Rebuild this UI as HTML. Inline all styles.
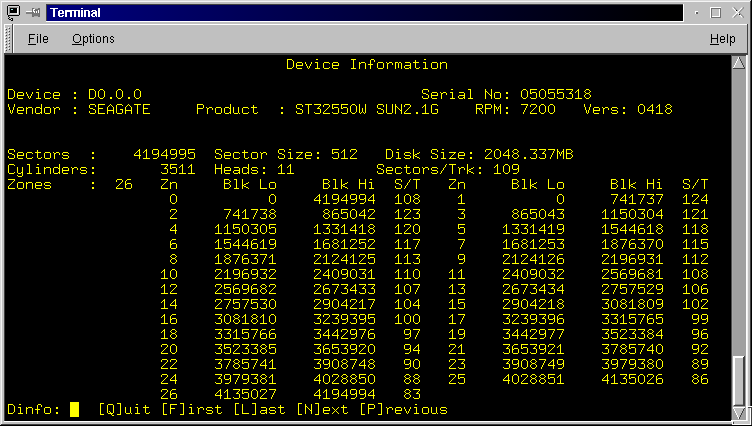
<!DOCTYPE html>
<html><head><meta charset="utf-8">
<style>
*{margin:0;padding:0;box-sizing:border-box}
html,body{width:752px;height:426px;overflow:hidden;background:#c0c0c0;position:relative}
i,.s,.t{position:absolute;display:block}
#title{left:47px;top:5px;width:636px;height:16px;background:linear-gradient(to right,#000080 0px,#000000 617px)}
</style></head><body>
<i style="left:0px;top:0px;width:752px;height:1px;background:#d8d8d8"></i><i style="left:0px;top:0px;width:1px;height:426px;background:#d8d8d8"></i><i style="left:1px;top:1px;width:750px;height:1px;background:#f4f4f4"></i><i style="left:1px;top:1px;width:1px;height:424px;background:#f4f4f4"></i><i style="left:750px;top:1px;width:1px;height:405px;background:#404040"></i><i style="left:751px;top:0px;width:1px;height:406px;background:#000"></i><i style="left:1px;top:424px;width:732px;height:1px;background:#404040"></i><i style="left:0px;top:425px;width:752px;height:1px;background:#000"></i><i style="left:46px;top:4px;width:638px;height:1px;background:#404040"></i><i style="left:46px;top:4px;width:1px;height:18px;background:#404040"></i><i style="left:46px;top:21px;width:638px;height:1px;background:#fff"></i><i style="left:683px;top:4px;width:1px;height:18px;background:#fff"></i><i style="left:4px;top:24px;width:744px;height:1px;background:#fff"></i><i style="left:4px;top:24px;width:1px;height:29px;background:#fff"></i><i style="left:747px;top:24px;width:1px;height:30px;background:#404040"></i><i style="left:4px;top:53px;width:744px;height:2px;background:#404040"></i><i style="left:12px;top:24px;width:1px;height:29px;background:#404040"></i><i style="left:13px;top:25px;width:1px;height:28px;background:#fff"></i><i style="left:6px;top:29px;width:1px;height:1px;background:#404040"></i><i style="left:5px;top:28px;width:1px;height:1px;background:#fff"></i><i style="left:9px;top:28px;width:1px;height:1px;background:#404040"></i><i style="left:8px;top:27px;width:1px;height:1px;background:#fff"></i><i style="left:6px;top:32px;width:1px;height:1px;background:#404040"></i><i style="left:5px;top:31px;width:1px;height:1px;background:#fff"></i><i style="left:9px;top:31px;width:1px;height:1px;background:#404040"></i><i style="left:8px;top:30px;width:1px;height:1px;background:#fff"></i><i style="left:6px;top:35px;width:1px;height:1px;background:#404040"></i><i style="left:5px;top:34px;width:1px;height:1px;background:#fff"></i><i style="left:9px;top:34px;width:1px;height:1px;background:#404040"></i><i style="left:8px;top:33px;width:1px;height:1px;background:#fff"></i><i style="left:6px;top:38px;width:1px;height:1px;background:#404040"></i><i style="left:5px;top:37px;width:1px;height:1px;background:#fff"></i><i style="left:9px;top:37px;width:1px;height:1px;background:#404040"></i><i style="left:8px;top:36px;width:1px;height:1px;background:#fff"></i><i style="left:6px;top:41px;width:1px;height:1px;background:#404040"></i><i style="left:5px;top:40px;width:1px;height:1px;background:#fff"></i><i style="left:9px;top:40px;width:1px;height:1px;background:#404040"></i><i style="left:8px;top:39px;width:1px;height:1px;background:#fff"></i><i style="left:6px;top:44px;width:1px;height:1px;background:#404040"></i><i style="left:5px;top:43px;width:1px;height:1px;background:#fff"></i><i style="left:9px;top:43px;width:1px;height:1px;background:#404040"></i><i style="left:8px;top:42px;width:1px;height:1px;background:#fff"></i><i style="left:6px;top:47px;width:1px;height:1px;background:#404040"></i><i style="left:5px;top:46px;width:1px;height:1px;background:#fff"></i><i style="left:9px;top:46px;width:1px;height:1px;background:#404040"></i><i style="left:8px;top:45px;width:1px;height:1px;background:#fff"></i><i style="left:6px;top:50px;width:1px;height:1px;background:#404040"></i><i style="left:5px;top:49px;width:1px;height:1px;background:#fff"></i><i style="left:9px;top:49px;width:1px;height:1px;background:#404040"></i><i style="left:8px;top:48px;width:1px;height:1px;background:#fff"></i><i style="left:4px;top:55px;width:1px;height:366px;background:#404040"></i><i style="left:5px;top:55px;width:726px;height:366px;background:#000"></i><i style="left:4px;top:421px;width:728px;height:1px;background:#fff"></i><i style="left:732px;top:421px;width:1px;height:4px;background:#fff"></i><i style="left:733px;top:422px;width:1px;height:3px;background:#404040"></i><i style="left:734px;top:421px;width:16px;height:3px;background:#c8c8c8"></i><i style="left:731px;top:55px;width:15px;height:366px;background:#a0a0a0"></i><i style="left:731px;top:54px;width:16px;height:2px;background:#404040"></i><i style="left:731px;top:55px;width:1px;height:366px;background:#505050"></i><i style="left:732px;top:56px;width:1px;height:364px;background:#a8a8a8"></i><i style="left:746px;top:55px;width:1px;height:366px;background:#fff"></i><i style="left:731px;top:420px;width:16px;height:1px;background:#fff"></i><i style="left:733px;top:356px;width:12px;height:50px;background:#c0c0c0"></i><i style="left:733px;top:356px;width:11px;height:2px;background:#fff"></i><i style="left:733px;top:356px;width:2px;height:49px;background:#fff"></i><i style="left:744px;top:356px;width:1px;height:50px;background:#404040"></i><i style="left:743px;top:357px;width:1px;height:49px;background:#404040"></i><i style="left:734px;top:405px;width:11px;height:1px;background:#404040"></i><i style="left:735px;top:404px;width:8px;height:1px;background:#909090"></i><i style="left:747px;top:55px;width:1px;height:366px;background:#f0f0f0"></i><i style="left:747px;top:406px;width:5px;height:1px;background:#fff"></i><i style="left:748px;top:407px;width:4px;height:1px;background:#404040"></i><i style="left:750px;top:408px;width:1px;height:17px;background:#fff"></i><i style="left:751px;top:408px;width:1px;height:17px;background:#404040"></i><i style="left:733px;top:424px;width:18px;height:1px;background:#fff"></i>
<i id="title"></i>
<svg class="s" style="left:0;top:0" width="752" height="50" shape-rendering="crispEdges"><path fill="#fff" d="M50 8h8v1h-8zM81 8h2v1h-2zM98 8h2v1h-2zM53 9h2v1h-2zM98 9h2v1h-2zM53 10h2v1h-2zM59 10h4v1h-4zM65 10h15v1h-15zM81 10h2v1h-2zM84 10h5v1h-5zM92 10h4v1h-4zM98 10h2v1h-2zM53 11h2v1h-2zM58 11h2v1h-2zM62 11h2v1h-2zM65 11h7v1h-7zM74 11h2v1h-2zM78 11h2v1h-2zM81 11h2v1h-2zM84 11h2v1h-2zM88 11h2v1h-2zM91 11h2v1h-2zM95 11h2v1h-2zM98 11h2v1h-2zM53 12h2v1h-2zM58 12h2v1h-2zM62 12h2v1h-2zM65 12h2v1h-2zM70 12h2v1h-2zM74 12h2v1h-2zM78 12h2v1h-2zM81 12h2v1h-2zM84 12h2v1h-2zM88 12h2v1h-2zM93 12h4v1h-4zM98 12h2v1h-2zM53 13h2v1h-2zM58 13h6v1h-6zM65 13h2v1h-2zM70 13h2v1h-2zM74 13h2v1h-2zM78 13h2v1h-2zM81 13h2v1h-2zM84 13h2v1h-2zM88 13h2v1h-2zM92 13h5v1h-5zM98 13h2v1h-2zM53 14h2v1h-2zM58 14h2v1h-2zM65 14h2v1h-2zM70 14h2v1h-2zM74 14h2v1h-2zM78 14h2v1h-2zM81 14h2v1h-2zM84 14h2v1h-2zM88 14h2v1h-2zM91 14h2v1h-2zM95 14h2v1h-2zM98 14h2v1h-2zM53 15h2v1h-2zM58 15h2v1h-2zM62 15h2v1h-2zM65 15h2v1h-2zM70 15h2v1h-2zM74 15h2v1h-2zM78 15h2v1h-2zM81 15h2v1h-2zM84 15h2v1h-2zM88 15h2v1h-2zM91 15h2v1h-2zM95 15h2v1h-2zM98 15h2v1h-2zM53 16h2v1h-2zM59 16h4v1h-4zM65 16h2v1h-2zM70 16h2v1h-2zM74 16h2v1h-2zM78 16h2v1h-2zM81 16h2v1h-2zM84 16h2v1h-2zM88 16h2v1h-2zM92 16h3v1h-3zM96 16h1v1h-1zM98 16h2v1h-2z"/><path fill="#000" d="M29 34h6v1h-6zM37 34h1v1h-1zM40 34h1v1h-1zM75 34h4v1h-4zM90 34h1v1h-1zM93 34h1v1h-1zM711 34h1v1h-1zM717 34h1v1h-1zM727 34h1v1h-1zM29 35h1v1h-1zM40 35h1v1h-1zM74 35h1v1h-1zM79 35h1v1h-1zM90 35h1v1h-1zM711 35h1v1h-1zM717 35h1v1h-1zM727 35h1v1h-1zM29 36h1v1h-1zM37 36h1v1h-1zM40 36h1v1h-1zM44 36h3v1h-3zM73 36h1v1h-1zM80 36h1v1h-1zM83 36h1v1h-1zM85 36h2v1h-2zM89 36h3v1h-3zM93 36h1v1h-1zM97 36h3v1h-3zM103 36h1v1h-1zM105 36h2v1h-2zM111 36h2v1h-2zM711 36h1v1h-1zM717 36h1v1h-1zM721 36h3v1h-3zM727 36h1v1h-1zM730 36h1v1h-1zM732 36h2v1h-2zM29 37h1v1h-1zM37 37h1v1h-1zM40 37h1v1h-1zM43 37h1v1h-1zM47 37h1v1h-1zM73 37h1v1h-1zM80 37h1v1h-1zM83 37h2v1h-2zM87 37h1v1h-1zM90 37h1v1h-1zM93 37h1v1h-1zM96 37h1v1h-1zM100 37h1v1h-1zM103 37h2v1h-2zM107 37h1v1h-1zM110 37h1v1h-1zM113 37h1v1h-1zM711 37h1v1h-1zM717 37h1v1h-1zM720 37h1v1h-1zM724 37h1v1h-1zM727 37h1v1h-1zM730 37h2v1h-2zM734 37h1v1h-1zM29 38h5v1h-5zM37 38h1v1h-1zM40 38h1v1h-1zM43 38h1v1h-1zM47 38h1v1h-1zM73 38h1v1h-1zM80 38h1v1h-1zM83 38h1v1h-1zM87 38h1v1h-1zM90 38h1v1h-1zM93 38h1v1h-1zM96 38h1v1h-1zM100 38h1v1h-1zM103 38h1v1h-1zM107 38h1v1h-1zM110 38h1v1h-1zM711 38h7v1h-7zM720 38h1v1h-1zM724 38h1v1h-1zM727 38h1v1h-1zM730 38h1v1h-1zM734 38h1v1h-1zM29 39h1v1h-1zM37 39h1v1h-1zM40 39h1v1h-1zM43 39h5v1h-5zM73 39h1v1h-1zM80 39h1v1h-1zM83 39h1v1h-1zM87 39h1v1h-1zM90 39h1v1h-1zM93 39h1v1h-1zM96 39h1v1h-1zM100 39h1v1h-1zM103 39h1v1h-1zM107 39h1v1h-1zM111 39h2v1h-2zM711 39h1v1h-1zM717 39h1v1h-1zM720 39h5v1h-5zM727 39h1v1h-1zM730 39h1v1h-1zM734 39h1v1h-1zM29 40h1v1h-1zM37 40h1v1h-1zM40 40h1v1h-1zM43 40h1v1h-1zM73 40h1v1h-1zM80 40h1v1h-1zM83 40h1v1h-1zM87 40h1v1h-1zM90 40h1v1h-1zM93 40h1v1h-1zM96 40h1v1h-1zM100 40h1v1h-1zM103 40h1v1h-1zM107 40h1v1h-1zM113 40h1v1h-1zM711 40h1v1h-1zM717 40h1v1h-1zM720 40h1v1h-1zM727 40h1v1h-1zM730 40h1v1h-1zM734 40h1v1h-1zM29 41h1v1h-1zM37 41h1v1h-1zM40 41h1v1h-1zM43 41h1v1h-1zM47 41h1v1h-1zM74 41h1v1h-1zM79 41h1v1h-1zM83 41h2v1h-2zM87 41h1v1h-1zM90 41h1v1h-1zM93 41h1v1h-1zM96 41h1v1h-1zM100 41h1v1h-1zM103 41h1v1h-1zM107 41h1v1h-1zM110 41h1v1h-1zM113 41h1v1h-1zM711 41h1v1h-1zM717 41h1v1h-1zM720 41h1v1h-1zM724 41h1v1h-1zM727 41h1v1h-1zM730 41h2v1h-2zM734 41h1v1h-1zM29 42h1v1h-1zM37 42h1v1h-1zM40 42h1v1h-1zM44 42h3v1h-3zM75 42h4v1h-4zM83 42h1v1h-1zM85 42h2v1h-2zM90 42h2v1h-2zM93 42h1v1h-1zM97 42h3v1h-3zM103 42h1v1h-1zM107 42h1v1h-1zM111 42h2v1h-2zM711 42h1v1h-1zM717 42h1v1h-1zM721 42h3v1h-3zM727 42h1v1h-1zM730 42h1v1h-1zM732 42h2v1h-2zM83 43h1v1h-1zM730 43h1v1h-1zM28 44h8v1h-8zM72 44h10v1h-10zM83 44h1v1h-1zM710 44h9v1h-9zM730 44h1v1h-1zM83 45h1v1h-1zM730 45h1v1h-1z"/></svg>
<svg class="s" style="left:0;top:0" width="24" height="24" shape-rendering="crispEdges"><rect x="8" y="5" width="11" height="1" fill="#000"/><rect x="8" y="15" width="11" height="1" fill="#000"/><rect x="7" y="6" width="1" height="9" fill="#000"/><rect x="19" y="6" width="1" height="9" fill="#000"/><rect x="8" y="6" width="11" height="9" fill="#c8c8c8"/><rect x="8" y="6" width="11" height="1" fill="#d4d4d4"/><rect x="8" y="6" width="1" height="9" fill="#d0d0d0"/><rect x="9" y="7" width="9" height="1" fill="#909090"/><rect x="9" y="7" width="1" height="7" fill="#909090"/><rect x="10" y="8" width="7" height="5" fill="#000"/><rect x="11" y="9" width="2" height="1" fill="#a0e8e8"/><rect x="17" y="8" width="1" height="6" fill="#fff"/><rect x="10" y="13" width="7" height="1" fill="#d8d8d8"/><rect x="8" y="16" width="1" height="1" fill="#000"/><rect x="9" y="17" width="1" height="1" fill="#000"/><rect x="8" y="18" width="1" height="1" fill="#000"/><rect x="9" y="19" width="2" height="1" fill="#000"/><rect x="11" y="18" width="2" height="1" fill="#000"/><rect x="12" y="19" width="1" height="1" fill="#000"/><rect x="11" y="20" width="2" height="1" fill="#000"/><rect x="11" y="19" width="1" height="1" fill="#e8e8e8"/></svg><svg class="s" style="left:0;top:0" width="48" height="24" shape-rendering="crispEdges"><rect x="26" y="11" width="6" height="1" fill="#fff"/><rect x="26" y="12" width="6" height="2" fill="#808080"/><rect x="32" y="8" width="8" height="9" fill="#707070"/><rect x="33" y="13" width="6" height="3" fill="#787878"/><rect x="34" y="8" width="4" height="1" fill="#b0b0b0"/><rect x="34" y="16" width="4" height="1" fill="#b0b0b0"/><rect x="33" y="9" width="2" height="1" fill="#fff"/><rect x="33" y="10" width="1" height="2" fill="#fff"/><rect x="34" y="11" width="1" height="2" fill="#fff"/><rect x="36" y="11" width="1" height="2" fill="#fff"/><rect x="38" y="10" width="1" height="3" fill="#fff"/></svg><svg class="s" style="left:0;top:0" width="752" height="24" shape-rendering="crispEdges"><rect x="695" y="11" width="3" height="1" fill="#fff"/><rect x="695" y="11" width="1" height="3" fill="#fff"/><rect x="696" y="12" width="2" height="2" fill="#606060"/><rect x="710" y="7" width="11" height="1" fill="#fff"/><rect x="710" y="7" width="1" height="11" fill="#fff"/><rect x="711" y="8" width="10" height="1" fill="#707070"/><rect x="711" y="8" width="1" height="10" fill="#707070"/><rect x="720" y="8" width="1" height="10" fill="#707070"/><rect x="711" y="17" width="10" height="1" fill="#707070"/><rect x="719" y="9" width="1" height="8" fill="#fff"/><rect x="712" y="16" width="8" height="1" fill="#fff"/>
<path d="M733.5 7.5 L743.5 17.5 M743.5 7.5 L733.5 17.5" stroke="#606060" stroke-width="1.2" fill="none" shape-rendering="auto"/>
<path d="M732.5 7.5 L742.5 17.5 M742.5 7.5 L732.5 17.5" stroke="#fff" stroke-width="1.2" fill="none" shape-rendering="auto"/>
<rect x="736" y="10" width="1" height="1" fill="#000"/><rect x="739" y="14" width="1" height="1" fill="#000"/>
</svg><svg class="s" style="left:0;top:0" width="752" height="426" shape-rendering="crispEdges"><rect x="738" y="57" width="1" height="1" fill="#fff"/><rect x="739" y="57" width="1" height="1" fill="#404040"/><rect x="738" y="58" width="1" height="1" fill="#fff"/><rect x="739" y="58" width="1" height="1" fill="#404040"/><rect x="738" y="59" width="2" height="1" fill="#c0c0c0"/><rect x="737" y="59" width="1" height="1" fill="#fff"/><rect x="740" y="59" width="1" height="1" fill="#404040"/><rect x="738" y="60" width="2" height="1" fill="#c0c0c0"/><rect x="737" y="60" width="1" height="1" fill="#fff"/><rect x="740" y="60" width="1" height="1" fill="#404040"/><rect x="737" y="61" width="4" height="1" fill="#c0c0c0"/><rect x="736" y="61" width="1" height="1" fill="#fff"/><rect x="741" y="61" width="1" height="1" fill="#404040"/><rect x="737" y="62" width="4" height="1" fill="#c0c0c0"/><rect x="736" y="62" width="1" height="1" fill="#fff"/><rect x="741" y="62" width="1" height="1" fill="#404040"/><rect x="736" y="63" width="6" height="1" fill="#c0c0c0"/><rect x="735" y="63" width="1" height="1" fill="#fff"/><rect x="742" y="63" width="1" height="1" fill="#404040"/><rect x="736" y="64" width="6" height="1" fill="#c0c0c0"/><rect x="735" y="64" width="1" height="1" fill="#fff"/><rect x="742" y="64" width="1" height="1" fill="#404040"/><rect x="735" y="65" width="8" height="1" fill="#c0c0c0"/><rect x="734" y="65" width="1" height="1" fill="#fff"/><rect x="743" y="65" width="1" height="1" fill="#404040"/><rect x="735" y="66" width="8" height="1" fill="#c0c0c0"/><rect x="734" y="66" width="1" height="1" fill="#fff"/><rect x="743" y="66" width="1" height="1" fill="#404040"/><rect x="734" y="67" width="10" height="1" fill="#c0c0c0"/><rect x="733" y="67" width="1" height="1" fill="#fff"/><rect x="744" y="67" width="1" height="1" fill="#404040"/><rect x="733" y="68" width="12" height="1" fill="#404040"/><rect x="733" y="407" width="12" height="1" fill="#fff"/><rect x="734" y="408" width="10" height="1" fill="#c0c0c0"/><rect x="733" y="408" width="1" height="1" fill="#fff"/><rect x="744" y="408" width="1" height="1" fill="#404040"/><rect x="735" y="409" width="8" height="1" fill="#c0c0c0"/><rect x="734" y="409" width="1" height="1" fill="#fff"/><rect x="743" y="409" width="1" height="1" fill="#404040"/><rect x="735" y="410" width="8" height="1" fill="#c0c0c0"/><rect x="734" y="410" width="1" height="1" fill="#fff"/><rect x="743" y="410" width="1" height="1" fill="#404040"/><rect x="736" y="411" width="6" height="1" fill="#c0c0c0"/><rect x="735" y="411" width="1" height="1" fill="#fff"/><rect x="742" y="411" width="1" height="1" fill="#404040"/><rect x="736" y="412" width="6" height="1" fill="#c0c0c0"/><rect x="735" y="412" width="1" height="1" fill="#fff"/><rect x="742" y="412" width="1" height="1" fill="#404040"/><rect x="737" y="413" width="4" height="1" fill="#c0c0c0"/><rect x="736" y="413" width="1" height="1" fill="#fff"/><rect x="741" y="413" width="1" height="1" fill="#404040"/><rect x="737" y="414" width="4" height="1" fill="#c0c0c0"/><rect x="736" y="414" width="1" height="1" fill="#fff"/><rect x="741" y="414" width="1" height="1" fill="#404040"/><rect x="738" y="415" width="2" height="1" fill="#c0c0c0"/><rect x="737" y="415" width="1" height="1" fill="#fff"/><rect x="740" y="415" width="1" height="1" fill="#404040"/><rect x="738" y="416" width="2" height="1" fill="#c0c0c0"/><rect x="737" y="416" width="1" height="1" fill="#fff"/><rect x="740" y="416" width="1" height="1" fill="#404040"/><rect x="738" y="417" width="1" height="1" fill="#fff"/><rect x="739" y="417" width="1" height="1" fill="#404040"/><rect x="738" y="418" width="1" height="1" fill="#fff"/><rect x="739" y="418" width="1" height="1" fill="#404040"/></svg>

<svg class="s" style="left:7px;top:57px" width="720" height="360" shape-rendering="crispEdges" fill="#ffff00"><defs><path id="g46" d="M4 10h2v1h-2zM4 11h2v1h-2z"/><path id="g47" d="M7 2h1v1h-1zM6 3h1v1h-1zM6 4h1v1h-1zM5 5h1v1h-1zM4 6h1v1h-1zM4 7h1v1h-1zM3 8h1v1h-1zM2 9h1v1h-1zM2 10h1v1h-1zM1 11h1v1h-1z"/><path id="g48" d="M3 2h3v1h-3zM2 3h1v1h-1zM6 3h1v1h-1zM1 4h1v1h-1zM7 4h1v1h-1zM1 5h1v1h-1zM7 5h1v1h-1zM1 6h1v1h-1zM7 6h1v1h-1zM1 7h1v1h-1zM7 7h1v1h-1zM1 8h1v1h-1zM7 8h1v1h-1zM1 9h1v1h-1zM7 9h1v1h-1zM2 10h1v1h-1zM6 10h1v1h-1zM3 11h3v1h-3z"/><path id="g49" d="M4 2h1v1h-1zM3 3h2v1h-2zM2 4h1v1h-1zM4 4h1v1h-1zM1 5h1v1h-1zM4 5h1v1h-1zM4 6h1v1h-1zM4 7h1v1h-1zM4 8h1v1h-1zM4 9h1v1h-1zM4 10h1v1h-1zM1 11h7v1h-7z"/><path id="g50" d="M2 2h5v1h-5zM1 3h1v1h-1zM7 3h1v1h-1zM1 4h1v1h-1zM7 4h1v1h-1zM6 5h1v1h-1zM5 6h1v1h-1zM4 7h1v1h-1zM3 8h1v1h-1zM2 9h1v1h-1zM1 10h1v1h-1zM1 11h7v1h-7z"/><path id="g51" d="M1 2h7v1h-7zM7 3h1v1h-1zM6 4h1v1h-1zM5 5h1v1h-1zM4 6h3v1h-3zM7 7h1v1h-1zM7 8h1v1h-1zM7 9h1v1h-1zM1 10h1v1h-1zM7 10h1v1h-1zM2 11h5v1h-5z"/><path id="g52" d="M6 2h1v1h-1zM5 3h2v1h-2zM4 4h1v1h-1zM6 4h1v1h-1zM3 5h1v1h-1zM6 5h1v1h-1zM2 6h1v1h-1zM6 6h1v1h-1zM1 7h1v1h-1zM6 7h1v1h-1zM1 8h7v1h-7zM6 9h1v1h-1zM6 10h1v1h-1zM6 11h1v1h-1z"/><path id="g53" d="M1 2h7v1h-7zM1 3h1v1h-1zM1 4h1v1h-1zM1 5h1v1h-1zM3 5h4v1h-4zM1 6h2v1h-2zM7 6h1v1h-1zM7 7h1v1h-1zM7 8h1v1h-1zM7 9h1v1h-1zM1 10h1v1h-1zM7 10h1v1h-1zM2 11h5v1h-5z"/><path id="g54" d="M3 2h4v1h-4zM2 3h1v1h-1zM1 4h1v1h-1zM1 5h1v1h-1zM1 6h1v1h-1zM3 6h4v1h-4zM1 7h2v1h-2zM7 7h1v1h-1zM1 8h1v1h-1zM7 8h1v1h-1zM1 9h1v1h-1zM7 9h1v1h-1zM1 10h1v1h-1zM7 10h1v1h-1zM2 11h5v1h-5z"/><path id="g55" d="M1 2h7v1h-7zM7 3h1v1h-1zM6 4h1v1h-1zM6 5h1v1h-1zM5 6h1v1h-1zM5 7h1v1h-1zM4 8h1v1h-1zM4 9h1v1h-1zM3 10h1v1h-1zM3 11h1v1h-1z"/><path id="g56" d="M3 2h3v1h-3zM2 3h1v1h-1zM6 3h1v1h-1zM1 4h1v1h-1zM7 4h1v1h-1zM2 5h1v1h-1zM6 5h1v1h-1zM3 6h3v1h-3zM2 7h1v1h-1zM6 7h1v1h-1zM1 8h1v1h-1zM7 8h1v1h-1zM1 9h1v1h-1zM7 9h1v1h-1zM2 10h1v1h-1zM6 10h1v1h-1zM3 11h3v1h-3z"/><path id="g57" d="M2 2h5v1h-5zM1 3h1v1h-1zM7 3h1v1h-1zM1 4h1v1h-1zM7 4h1v1h-1zM1 5h1v1h-1zM7 5h1v1h-1zM1 6h1v1h-1zM6 6h2v1h-2zM2 7h4v1h-4zM7 7h1v1h-1zM7 8h1v1h-1zM7 9h1v1h-1zM6 10h1v1h-1zM2 11h4v1h-4z"/><path id="g58" d="M4 5h2v1h-2zM4 6h2v1h-2zM4 10h2v1h-2zM4 11h2v1h-2z"/><path id="g65" d="M4 2h1v1h-1zM3 3h1v1h-1zM5 3h1v1h-1zM2 4h1v1h-1zM6 4h1v1h-1zM1 5h1v1h-1zM7 5h1v1h-1zM1 6h1v1h-1zM7 6h1v1h-1zM1 7h1v1h-1zM7 7h1v1h-1zM1 8h7v1h-7zM1 9h1v1h-1zM7 9h1v1h-1zM1 10h1v1h-1zM7 10h1v1h-1zM1 11h1v1h-1zM7 11h1v1h-1z"/><path id="g66" d="M1 2h5v1h-5zM1 3h1v1h-1zM6 3h1v1h-1zM1 4h1v1h-1zM7 4h1v1h-1zM1 5h1v1h-1zM6 5h1v1h-1zM1 6h5v1h-5zM1 7h1v1h-1zM6 7h1v1h-1zM1 8h1v1h-1zM7 8h1v1h-1zM1 9h1v1h-1zM7 9h1v1h-1zM1 10h1v1h-1zM6 10h1v1h-1zM1 11h5v1h-5z"/><path id="g67" d="M2 2h5v1h-5zM1 3h1v1h-1zM7 3h1v1h-1zM1 4h1v1h-1zM1 5h1v1h-1zM1 6h1v1h-1zM1 7h1v1h-1zM1 8h1v1h-1zM1 9h1v1h-1zM1 10h1v1h-1zM7 10h1v1h-1zM2 11h5v1h-5z"/><path id="g68" d="M1 2h5v1h-5zM1 3h1v1h-1zM6 3h1v1h-1zM1 4h1v1h-1zM7 4h1v1h-1zM1 5h1v1h-1zM7 5h1v1h-1zM1 6h1v1h-1zM7 6h1v1h-1zM1 7h1v1h-1zM7 7h1v1h-1zM1 8h1v1h-1zM7 8h1v1h-1zM1 9h1v1h-1zM7 9h1v1h-1zM1 10h1v1h-1zM6 10h1v1h-1zM1 11h5v1h-5z"/><path id="g69" d="M1 2h7v1h-7zM1 3h1v1h-1zM1 4h1v1h-1zM1 5h1v1h-1zM1 6h5v1h-5zM1 7h1v1h-1zM1 8h1v1h-1zM1 9h1v1h-1zM1 10h1v1h-1zM1 11h7v1h-7z"/><path id="g70" d="M1 2h7v1h-7zM1 3h1v1h-1zM1 4h1v1h-1zM1 5h1v1h-1zM1 6h5v1h-5zM1 7h1v1h-1zM1 8h1v1h-1zM1 9h1v1h-1zM1 10h1v1h-1zM1 11h1v1h-1z"/><path id="g71" d="M2 2h5v1h-5zM1 3h1v1h-1zM7 3h1v1h-1zM1 4h1v1h-1zM1 5h1v1h-1zM1 6h1v1h-1zM1 7h1v1h-1zM5 7h3v1h-3zM1 8h1v1h-1zM7 8h1v1h-1zM1 9h1v1h-1zM7 9h1v1h-1zM1 10h1v1h-1zM7 10h1v1h-1zM2 11h5v1h-5z"/><path id="g72" d="M1 2h1v1h-1zM7 2h1v1h-1zM1 3h1v1h-1zM7 3h1v1h-1zM1 4h1v1h-1zM7 4h1v1h-1zM1 5h1v1h-1zM7 5h1v1h-1zM1 6h7v1h-7zM1 7h1v1h-1zM7 7h1v1h-1zM1 8h1v1h-1zM7 8h1v1h-1zM1 9h1v1h-1zM7 9h1v1h-1zM1 10h1v1h-1zM7 10h1v1h-1zM1 11h1v1h-1zM7 11h1v1h-1z"/><path id="g73" d="M2 2h5v1h-5zM4 3h1v1h-1zM4 4h1v1h-1zM4 5h1v1h-1zM4 6h1v1h-1zM4 7h1v1h-1zM4 8h1v1h-1zM4 9h1v1h-1zM4 10h1v1h-1zM2 11h5v1h-5z"/><path id="g76" d="M1 2h1v1h-1zM1 3h1v1h-1zM1 4h1v1h-1zM1 5h1v1h-1zM1 6h1v1h-1zM1 7h1v1h-1zM1 8h1v1h-1zM1 9h1v1h-1zM1 10h1v1h-1zM1 11h7v1h-7z"/><path id="g77" d="M1 2h1v1h-1zM7 2h1v1h-1zM1 3h1v1h-1zM7 3h1v1h-1zM1 4h2v1h-2zM6 4h2v1h-2zM1 5h1v1h-1zM3 5h1v1h-1zM5 5h1v1h-1zM7 5h1v1h-1zM1 6h1v1h-1zM3 6h1v1h-1zM5 6h1v1h-1zM7 6h1v1h-1zM1 7h1v1h-1zM4 7h1v1h-1zM7 7h1v1h-1zM1 8h1v1h-1zM4 8h1v1h-1zM7 8h1v1h-1zM1 9h1v1h-1zM7 9h1v1h-1zM1 10h1v1h-1zM7 10h1v1h-1zM1 11h1v1h-1zM7 11h1v1h-1z"/><path id="g78" d="M1 2h1v1h-1zM7 2h1v1h-1zM1 3h1v1h-1zM7 3h1v1h-1zM1 4h2v1h-2zM7 4h1v1h-1zM1 5h1v1h-1zM3 5h1v1h-1zM7 5h1v1h-1zM1 6h1v1h-1zM4 6h1v1h-1zM7 6h1v1h-1zM1 7h1v1h-1zM5 7h1v1h-1zM7 7h1v1h-1zM1 8h1v1h-1zM6 8h2v1h-2zM1 9h1v1h-1zM7 9h1v1h-1zM1 10h1v1h-1zM7 10h1v1h-1zM1 11h1v1h-1zM7 11h1v1h-1z"/><path id="g80" d="M1 2h6v1h-6zM1 3h1v1h-1zM7 3h1v1h-1zM1 4h1v1h-1zM7 4h1v1h-1zM1 5h1v1h-1zM7 5h1v1h-1zM1 6h6v1h-6zM1 7h1v1h-1zM1 8h1v1h-1zM1 9h1v1h-1zM1 10h1v1h-1zM1 11h1v1h-1z"/><path id="g81" d="M2 2h5v1h-5zM1 3h1v1h-1zM7 3h1v1h-1zM1 4h1v1h-1zM7 4h1v1h-1zM1 5h1v1h-1zM7 5h1v1h-1zM1 6h1v1h-1zM7 6h1v1h-1zM1 7h1v1h-1zM7 7h1v1h-1zM1 8h1v1h-1zM7 8h1v1h-1zM1 9h1v1h-1zM3 9h1v1h-1zM7 9h1v1h-1zM1 10h1v1h-1zM4 10h1v1h-1zM7 10h1v1h-1zM2 11h5v1h-5zM5 12h1v1h-1zM6 13h2v1h-2z"/><path id="g82" d="M1 2h6v1h-6zM1 3h1v1h-1zM7 3h1v1h-1zM1 4h1v1h-1zM7 4h1v1h-1zM1 5h1v1h-1zM7 5h1v1h-1zM1 6h6v1h-6zM1 7h1v1h-1zM4 7h1v1h-1zM1 8h1v1h-1zM5 8h1v1h-1zM1 9h1v1h-1zM6 9h1v1h-1zM1 10h1v1h-1zM7 10h1v1h-1zM1 11h1v1h-1zM7 11h1v1h-1z"/><path id="g83" d="M2 2h5v1h-5zM1 3h1v1h-1zM7 3h1v1h-1zM1 4h1v1h-1zM7 4h1v1h-1zM1 5h1v1h-1zM2 6h3v1h-3zM5 7h2v1h-2zM7 8h1v1h-1zM1 9h1v1h-1zM7 9h1v1h-1zM1 10h1v1h-1zM7 10h1v1h-1zM2 11h5v1h-5z"/><path id="g84" d="M1 2h7v1h-7zM4 3h1v1h-1zM4 4h1v1h-1zM4 5h1v1h-1zM4 6h1v1h-1zM4 7h1v1h-1zM4 8h1v1h-1zM4 9h1v1h-1zM4 10h1v1h-1zM4 11h1v1h-1z"/><path id="g85" d="M1 2h1v1h-1zM7 2h1v1h-1zM1 3h1v1h-1zM7 3h1v1h-1zM1 4h1v1h-1zM7 4h1v1h-1zM1 5h1v1h-1zM7 5h1v1h-1zM1 6h1v1h-1zM7 6h1v1h-1zM1 7h1v1h-1zM7 7h1v1h-1zM1 8h1v1h-1zM7 8h1v1h-1zM1 9h1v1h-1zM7 9h1v1h-1zM1 10h1v1h-1zM7 10h1v1h-1zM2 11h5v1h-5z"/><path id="g86" d="M1 2h1v1h-1zM7 2h1v1h-1zM1 3h1v1h-1zM7 3h1v1h-1zM1 4h1v1h-1zM7 4h1v1h-1zM2 5h1v1h-1zM6 5h1v1h-1zM2 6h1v1h-1zM6 6h1v1h-1zM2 7h1v1h-1zM6 7h1v1h-1zM3 8h1v1h-1zM5 8h1v1h-1zM3 9h1v1h-1zM5 9h1v1h-1zM3 10h1v1h-1zM5 10h1v1h-1zM4 11h1v1h-1z"/><path id="g87" d="M1 2h1v1h-1zM7 2h1v1h-1zM1 3h1v1h-1zM7 3h1v1h-1zM1 4h1v1h-1zM7 4h1v1h-1zM1 5h1v1h-1zM7 5h1v1h-1zM1 6h1v1h-1zM4 6h1v1h-1zM7 6h1v1h-1zM1 7h1v1h-1zM4 7h1v1h-1zM7 7h1v1h-1zM1 8h1v1h-1zM4 8h1v1h-1zM7 8h1v1h-1zM1 9h1v1h-1zM4 9h1v1h-1zM7 9h1v1h-1zM1 10h1v1h-1zM3 10h1v1h-1zM5 10h1v1h-1zM7 10h1v1h-1zM2 11h1v1h-1zM6 11h1v1h-1z"/><path id="g90" d="M1 2h7v1h-7zM7 3h1v1h-1zM6 4h1v1h-1zM5 5h1v1h-1zM4 6h1v1h-1zM3 7h1v1h-1zM2 8h1v1h-1zM1 9h1v1h-1zM1 10h1v1h-1zM1 11h7v1h-7z"/><path id="g91" d="M3 1h4v1h-4zM3 2h1v1h-1zM3 3h1v1h-1zM3 4h1v1h-1zM3 5h1v1h-1zM3 6h1v1h-1zM3 7h1v1h-1zM3 8h1v1h-1zM3 9h1v1h-1zM3 10h1v1h-1zM3 11h1v1h-1zM3 12h4v1h-4z"/><path id="g93" d="M2 1h4v1h-4zM5 2h1v1h-1zM5 3h1v1h-1zM5 4h1v1h-1zM5 5h1v1h-1zM5 6h1v1h-1zM5 7h1v1h-1zM5 8h1v1h-1zM5 9h1v1h-1zM5 10h1v1h-1zM5 11h1v1h-1zM2 12h4v1h-4z"/><path id="g97" d="M2 5h5v1h-5zM7 6h1v1h-1zM7 7h1v1h-1zM2 8h6v1h-6zM1 9h1v1h-1zM7 9h1v1h-1zM1 10h1v1h-1zM6 10h2v1h-2zM2 11h4v1h-4zM7 11h1v1h-1z"/><path id="g99" d="M2 5h5v1h-5zM1 6h1v1h-1zM7 6h1v1h-1zM1 7h1v1h-1zM1 8h1v1h-1zM1 9h1v1h-1zM1 10h1v1h-1zM7 10h1v1h-1zM2 11h5v1h-5z"/><path id="g100" d="M7 2h1v1h-1zM7 3h1v1h-1zM7 4h1v1h-1zM2 5h4v1h-4zM7 5h1v1h-1zM1 6h1v1h-1zM6 6h2v1h-2zM1 7h1v1h-1zM7 7h1v1h-1zM1 8h1v1h-1zM7 8h1v1h-1zM1 9h1v1h-1zM7 9h1v1h-1zM1 10h1v1h-1zM6 10h2v1h-2zM2 11h4v1h-4zM7 11h1v1h-1z"/><path id="g101" d="M2 5h5v1h-5zM1 6h1v1h-1zM7 6h1v1h-1zM1 7h1v1h-1zM7 7h1v1h-1zM1 8h7v1h-7zM1 9h1v1h-1zM1 10h1v1h-1zM2 11h5v1h-5z"/><path id="g102" d="M4 2h3v1h-3zM3 3h1v1h-1zM7 3h1v1h-1zM3 4h1v1h-1zM7 4h1v1h-1zM3 5h1v1h-1zM3 6h1v1h-1zM1 7h5v1h-5zM3 8h1v1h-1zM3 9h1v1h-1zM3 10h1v1h-1zM3 11h1v1h-1z"/><path id="g105" d="M3 2h2v1h-2zM2 5h3v1h-3zM4 6h1v1h-1zM4 7h1v1h-1zM4 8h1v1h-1zM4 9h1v1h-1zM4 10h1v1h-1zM2 11h5v1h-5z"/><path id="g107" d="M1 2h1v1h-1zM1 3h1v1h-1zM1 4h1v1h-1zM1 5h1v1h-1zM7 5h1v1h-1zM1 6h1v1h-1zM5 6h2v1h-2zM1 7h1v1h-1zM3 7h2v1h-2zM1 8h2v1h-2zM1 9h1v1h-1zM3 9h2v1h-2zM1 10h1v1h-1zM5 10h2v1h-2zM1 11h1v1h-1zM7 11h1v1h-1z"/><path id="g108" d="M2 2h3v1h-3zM4 3h1v1h-1zM4 4h1v1h-1zM4 5h1v1h-1zM4 6h1v1h-1zM4 7h1v1h-1zM4 8h1v1h-1zM4 9h1v1h-1zM4 10h1v1h-1zM2 11h5v1h-5z"/><path id="g109" d="M1 5h3v1h-3zM5 5h2v1h-2zM1 6h1v1h-1zM4 6h1v1h-1zM7 6h1v1h-1zM1 7h1v1h-1zM4 7h1v1h-1zM7 7h1v1h-1zM1 8h1v1h-1zM4 8h1v1h-1zM7 8h1v1h-1zM1 9h1v1h-1zM4 9h1v1h-1zM7 9h1v1h-1zM1 10h1v1h-1zM4 10h1v1h-1zM7 10h1v1h-1zM1 11h1v1h-1zM7 11h1v1h-1z"/><path id="g110" d="M1 5h1v1h-1zM3 5h4v1h-4zM1 6h2v1h-2zM7 6h1v1h-1zM1 7h1v1h-1zM7 7h1v1h-1zM1 8h1v1h-1zM7 8h1v1h-1zM1 9h1v1h-1zM7 9h1v1h-1zM1 10h1v1h-1zM7 10h1v1h-1zM1 11h1v1h-1zM7 11h1v1h-1z"/><path id="g111" d="M2 5h5v1h-5zM1 6h1v1h-1zM7 6h1v1h-1zM1 7h1v1h-1zM7 7h1v1h-1zM1 8h1v1h-1zM7 8h1v1h-1zM1 9h1v1h-1zM7 9h1v1h-1zM1 10h1v1h-1zM7 10h1v1h-1zM2 11h5v1h-5z"/><path id="g114" d="M1 5h1v1h-1zM4 5h3v1h-3zM2 6h2v1h-2zM7 6h1v1h-1zM2 7h1v1h-1zM7 7h1v1h-1zM2 8h1v1h-1zM2 9h1v1h-1zM2 10h1v1h-1zM2 11h1v1h-1z"/><path id="g115" d="M2 5h5v1h-5zM1 6h1v1h-1zM7 6h1v1h-1zM1 7h1v1h-1zM2 8h5v1h-5zM7 9h1v1h-1zM1 10h1v1h-1zM7 10h1v1h-1zM2 11h5v1h-5z"/><path id="g116" d="M3 3h1v1h-1zM3 4h1v1h-1zM1 5h6v1h-6zM3 6h1v1h-1zM3 7h1v1h-1zM3 8h1v1h-1zM3 9h1v1h-1zM3 10h1v1h-1zM7 10h1v1h-1zM4 11h3v1h-3z"/><path id="g117" d="M1 5h1v1h-1zM6 5h1v1h-1zM1 6h1v1h-1zM6 6h1v1h-1zM1 7h1v1h-1zM6 7h1v1h-1zM1 8h1v1h-1zM6 8h1v1h-1zM1 9h1v1h-1zM6 9h1v1h-1zM1 10h1v1h-1zM6 10h1v1h-1zM2 11h4v1h-4zM7 11h1v1h-1z"/><path id="g118" d="M1 5h1v1h-1zM7 5h1v1h-1zM1 6h1v1h-1zM7 6h1v1h-1zM2 7h1v1h-1zM6 7h1v1h-1zM2 8h1v1h-1zM6 8h1v1h-1zM3 9h1v1h-1zM5 9h1v1h-1zM3 10h1v1h-1zM5 10h1v1h-1zM4 11h1v1h-1z"/><path id="g120" d="M1 5h1v1h-1zM7 5h1v1h-1zM2 6h1v1h-1zM6 6h1v1h-1zM3 7h1v1h-1zM5 7h1v1h-1zM4 8h1v1h-1zM3 9h1v1h-1zM5 9h1v1h-1zM2 10h1v1h-1zM6 10h1v1h-1zM1 11h1v1h-1zM7 11h1v1h-1z"/><path id="g121" d="M1 5h1v1h-1zM6 5h1v1h-1zM1 6h1v1h-1zM6 6h1v1h-1zM1 7h1v1h-1zM6 7h1v1h-1zM1 8h1v1h-1zM6 8h1v1h-1zM1 9h1v1h-1zM6 9h1v1h-1zM1 10h1v1h-1zM5 10h2v1h-2zM2 11h3v1h-3zM6 11h1v1h-1zM6 12h1v1h-1zM1 13h1v1h-1zM6 13h1v1h-1zM2 14h4v1h-4z"/><path id="g122" d="M1 5h7v1h-7zM6 6h1v1h-1zM5 7h1v1h-1zM4 8h1v1h-1zM3 9h1v1h-1zM2 10h1v1h-1zM1 11h7v1h-7z"/></defs><use href="#g68" x="279" y="0"/><use href="#g101" x="288" y="0"/><use href="#g118" x="297" y="0"/><use href="#g105" x="306" y="0"/><use href="#g99" x="315" y="0"/><use href="#g101" x="324" y="0"/><use href="#g73" x="342" y="0"/><use href="#g110" x="351" y="0"/><use href="#g102" x="360" y="0"/><use href="#g111" x="369" y="0"/><use href="#g114" x="378" y="0"/><use href="#g109" x="387" y="0"/><use href="#g97" x="396" y="0"/><use href="#g116" x="405" y="0"/><use href="#g105" x="414" y="0"/><use href="#g111" x="423" y="0"/><use href="#g110" x="432" y="0"/><use href="#g68" x="0" y="30"/><use href="#g101" x="9" y="30"/><use href="#g118" x="18" y="30"/><use href="#g105" x="27" y="30"/><use href="#g99" x="36" y="30"/><use href="#g101" x="45" y="30"/><use href="#g58" x="63" y="30"/><use href="#g68" x="81" y="30"/><use href="#g48" x="90" y="30"/><use href="#g46" x="99" y="30"/><use href="#g48" x="108" y="30"/><use href="#g46" x="117" y="30"/><use href="#g48" x="126" y="30"/><use href="#g83" x="414" y="30"/><use href="#g101" x="423" y="30"/><use href="#g114" x="432" y="30"/><use href="#g105" x="441" y="30"/><use href="#g97" x="450" y="30"/><use href="#g108" x="459" y="30"/><use href="#g78" x="477" y="30"/><use href="#g111" x="486" y="30"/><use href="#g58" x="495" y="30"/><use href="#g48" x="513" y="30"/><use href="#g53" x="522" y="30"/><use href="#g48" x="531" y="30"/><use href="#g53" x="540" y="30"/><use href="#g53" x="549" y="30"/><use href="#g51" x="558" y="30"/><use href="#g49" x="567" y="30"/><use href="#g56" x="576" y="30"/><use href="#g86" x="0" y="45"/><use href="#g101" x="9" y="45"/><use href="#g110" x="18" y="45"/><use href="#g100" x="27" y="45"/><use href="#g111" x="36" y="45"/><use href="#g114" x="45" y="45"/><use href="#g58" x="63" y="45"/><use href="#g83" x="81" y="45"/><use href="#g69" x="90" y="45"/><use href="#g65" x="99" y="45"/><use href="#g71" x="108" y="45"/><use href="#g65" x="117" y="45"/><use href="#g84" x="126" y="45"/><use href="#g69" x="135" y="45"/><use href="#g80" x="189" y="45"/><use href="#g114" x="198" y="45"/><use href="#g111" x="207" y="45"/><use href="#g100" x="216" y="45"/><use href="#g117" x="225" y="45"/><use href="#g99" x="234" y="45"/><use href="#g116" x="243" y="45"/><use href="#g58" x="270" y="45"/><use href="#g83" x="288" y="45"/><use href="#g84" x="297" y="45"/><use href="#g51" x="306" y="45"/><use href="#g50" x="315" y="45"/><use href="#g53" x="324" y="45"/><use href="#g53" x="333" y="45"/><use href="#g48" x="342" y="45"/><use href="#g87" x="351" y="45"/><use href="#g83" x="369" y="45"/><use href="#g85" x="378" y="45"/><use href="#g78" x="387" y="45"/><use href="#g50" x="396" y="45"/><use href="#g46" x="405" y="45"/><use href="#g49" x="414" y="45"/><use href="#g71" x="423" y="45"/><use href="#g82" x="468" y="45"/><use href="#g80" x="477" y="45"/><use href="#g77" x="486" y="45"/><use href="#g58" x="495" y="45"/><use href="#g55" x="513" y="45"/><use href="#g50" x="522" y="45"/><use href="#g48" x="531" y="45"/><use href="#g48" x="540" y="45"/><use href="#g86" x="576" y="45"/><use href="#g101" x="585" y="45"/><use href="#g114" x="594" y="45"/><use href="#g115" x="603" y="45"/><use href="#g58" x="612" y="45"/><use href="#g48" x="630" y="45"/><use href="#g52" x="639" y="45"/><use href="#g49" x="648" y="45"/><use href="#g56" x="657" y="45"/><use href="#g83" x="0" y="90"/><use href="#g101" x="9" y="90"/><use href="#g99" x="18" y="90"/><use href="#g116" x="27" y="90"/><use href="#g111" x="36" y="90"/><use href="#g114" x="45" y="90"/><use href="#g115" x="54" y="90"/><use href="#g58" x="81" y="90"/><use href="#g52" x="126" y="90"/><use href="#g49" x="135" y="90"/><use href="#g57" x="144" y="90"/><use href="#g52" x="153" y="90"/><use href="#g57" x="162" y="90"/><use href="#g57" x="171" y="90"/><use href="#g53" x="180" y="90"/><use href="#g83" x="207" y="90"/><use href="#g101" x="216" y="90"/><use href="#g99" x="225" y="90"/><use href="#g116" x="234" y="90"/><use href="#g111" x="243" y="90"/><use href="#g114" x="252" y="90"/><use href="#g83" x="270" y="90"/><use href="#g105" x="279" y="90"/><use href="#g122" x="288" y="90"/><use href="#g101" x="297" y="90"/><use href="#g58" x="306" y="90"/><use href="#g53" x="324" y="90"/><use href="#g49" x="333" y="90"/><use href="#g50" x="342" y="90"/><use href="#g68" x="378" y="90"/><use href="#g105" x="387" y="90"/><use href="#g115" x="396" y="90"/><use href="#g107" x="405" y="90"/><use href="#g83" x="423" y="90"/><use href="#g105" x="432" y="90"/><use href="#g122" x="441" y="90"/><use href="#g101" x="450" y="90"/><use href="#g58" x="459" y="90"/><use href="#g50" x="477" y="90"/><use href="#g48" x="486" y="90"/><use href="#g52" x="495" y="90"/><use href="#g56" x="504" y="90"/><use href="#g46" x="513" y="90"/><use href="#g51" x="522" y="90"/><use href="#g51" x="531" y="90"/><use href="#g55" x="540" y="90"/><use href="#g77" x="549" y="90"/><use href="#g66" x="558" y="90"/><use href="#g67" x="0" y="105"/><use href="#g121" x="9" y="105"/><use href="#g108" x="18" y="105"/><use href="#g105" x="27" y="105"/><use href="#g110" x="36" y="105"/><use href="#g100" x="45" y="105"/><use href="#g101" x="54" y="105"/><use href="#g114" x="63" y="105"/><use href="#g115" x="72" y="105"/><use href="#g58" x="81" y="105"/><use href="#g51" x="153" y="105"/><use href="#g53" x="162" y="105"/><use href="#g49" x="171" y="105"/><use href="#g49" x="180" y="105"/><use href="#g72" x="207" y="105"/><use href="#g101" x="216" y="105"/><use href="#g97" x="225" y="105"/><use href="#g100" x="234" y="105"/><use href="#g115" x="243" y="105"/><use href="#g58" x="252" y="105"/><use href="#g49" x="270" y="105"/><use href="#g49" x="279" y="105"/><use href="#g83" x="369" y="105"/><use href="#g101" x="378" y="105"/><use href="#g99" x="387" y="105"/><use href="#g116" x="396" y="105"/><use href="#g111" x="405" y="105"/><use href="#g114" x="414" y="105"/><use href="#g115" x="423" y="105"/><use href="#g47" x="432" y="105"/><use href="#g84" x="441" y="105"/><use href="#g114" x="450" y="105"/><use href="#g107" x="459" y="105"/><use href="#g58" x="468" y="105"/><use href="#g49" x="486" y="105"/><use href="#g48" x="495" y="105"/><use href="#g57" x="504" y="105"/><use href="#g90" x="0" y="120"/><use href="#g111" x="9" y="120"/><use href="#g110" x="18" y="120"/><use href="#g101" x="27" y="120"/><use href="#g115" x="36" y="120"/><use href="#g58" x="81" y="120"/><use href="#g50" x="108" y="120"/><use href="#g54" x="117" y="120"/><use href="#g90" x="153" y="120"/><use href="#g110" x="162" y="120"/><use href="#g66" x="216" y="120"/><use href="#g108" x="225" y="120"/><use href="#g107" x="234" y="120"/><use href="#g76" x="252" y="120"/><use href="#g111" x="261" y="120"/><use href="#g66" x="315" y="120"/><use href="#g108" x="324" y="120"/><use href="#g107" x="333" y="120"/><use href="#g72" x="351" y="120"/><use href="#g105" x="360" y="120"/><use href="#g83" x="387" y="120"/><use href="#g47" x="396" y="120"/><use href="#g84" x="405" y="120"/><use href="#g90" x="441" y="120"/><use href="#g110" x="450" y="120"/><use href="#g66" x="504" y="120"/><use href="#g108" x="513" y="120"/><use href="#g107" x="522" y="120"/><use href="#g76" x="540" y="120"/><use href="#g111" x="549" y="120"/><use href="#g66" x="603" y="120"/><use href="#g108" x="612" y="120"/><use href="#g107" x="621" y="120"/><use href="#g72" x="639" y="120"/><use href="#g105" x="648" y="120"/><use href="#g83" x="675" y="120"/><use href="#g47" x="684" y="120"/><use href="#g84" x="693" y="120"/><use href="#g48" x="162" y="135"/><use href="#g48" x="261" y="135"/><use href="#g52" x="306" y="135"/><use href="#g49" x="315" y="135"/><use href="#g57" x="324" y="135"/><use href="#g52" x="333" y="135"/><use href="#g57" x="342" y="135"/><use href="#g57" x="351" y="135"/><use href="#g52" x="360" y="135"/><use href="#g49" x="387" y="135"/><use href="#g48" x="396" y="135"/><use href="#g56" x="405" y="135"/><use href="#g49" x="450" y="135"/><use href="#g48" x="549" y="135"/><use href="#g55" x="603" y="135"/><use href="#g52" x="612" y="135"/><use href="#g49" x="621" y="135"/><use href="#g55" x="630" y="135"/><use href="#g51" x="639" y="135"/><use href="#g55" x="648" y="135"/><use href="#g49" x="675" y="135"/><use href="#g50" x="684" y="135"/><use href="#g52" x="693" y="135"/><use href="#g50" x="162" y="150"/><use href="#g55" x="216" y="150"/><use href="#g52" x="225" y="150"/><use href="#g49" x="234" y="150"/><use href="#g55" x="243" y="150"/><use href="#g51" x="252" y="150"/><use href="#g56" x="261" y="150"/><use href="#g56" x="315" y="150"/><use href="#g54" x="324" y="150"/><use href="#g53" x="333" y="150"/><use href="#g48" x="342" y="150"/><use href="#g52" x="351" y="150"/><use href="#g50" x="360" y="150"/><use href="#g49" x="387" y="150"/><use href="#g50" x="396" y="150"/><use href="#g51" x="405" y="150"/><use href="#g51" x="450" y="150"/><use href="#g56" x="504" y="150"/><use href="#g54" x="513" y="150"/><use href="#g53" x="522" y="150"/><use href="#g48" x="531" y="150"/><use href="#g52" x="540" y="150"/><use href="#g51" x="549" y="150"/><use href="#g49" x="594" y="150"/><use href="#g49" x="603" y="150"/><use href="#g53" x="612" y="150"/><use href="#g48" x="621" y="150"/><use href="#g51" x="630" y="150"/><use href="#g48" x="639" y="150"/><use href="#g52" x="648" y="150"/><use href="#g49" x="675" y="150"/><use href="#g50" x="684" y="150"/><use href="#g49" x="693" y="150"/><use href="#g52" x="162" y="165"/><use href="#g49" x="207" y="165"/><use href="#g49" x="216" y="165"/><use href="#g53" x="225" y="165"/><use href="#g48" x="234" y="165"/><use href="#g51" x="243" y="165"/><use href="#g48" x="252" y="165"/><use href="#g53" x="261" y="165"/><use href="#g49" x="306" y="165"/><use href="#g51" x="315" y="165"/><use href="#g51" x="324" y="165"/><use href="#g49" x="333" y="165"/><use href="#g52" x="342" y="165"/><use href="#g49" x="351" y="165"/><use href="#g56" x="360" y="165"/><use href="#g49" x="387" y="165"/><use href="#g50" x="396" y="165"/><use href="#g48" x="405" y="165"/><use href="#g53" x="450" y="165"/><use href="#g49" x="495" y="165"/><use href="#g51" x="504" y="165"/><use href="#g51" x="513" y="165"/><use href="#g49" x="522" y="165"/><use href="#g52" x="531" y="165"/><use href="#g49" x="540" y="165"/><use href="#g57" x="549" y="165"/><use href="#g49" x="594" y="165"/><use href="#g53" x="603" y="165"/><use href="#g52" x="612" y="165"/><use href="#g52" x="621" y="165"/><use href="#g54" x="630" y="165"/><use href="#g49" x="639" y="165"/><use href="#g56" x="648" y="165"/><use href="#g49" x="675" y="165"/><use href="#g49" x="684" y="165"/><use href="#g56" x="693" y="165"/><use href="#g54" x="162" y="180"/><use href="#g49" x="207" y="180"/><use href="#g53" x="216" y="180"/><use href="#g52" x="225" y="180"/><use href="#g52" x="234" y="180"/><use href="#g54" x="243" y="180"/><use href="#g49" x="252" y="180"/><use href="#g57" x="261" y="180"/><use href="#g49" x="306" y="180"/><use href="#g54" x="315" y="180"/><use href="#g56" x="324" y="180"/><use href="#g49" x="333" y="180"/><use href="#g50" x="342" y="180"/><use href="#g53" x="351" y="180"/><use href="#g50" x="360" y="180"/><use href="#g49" x="387" y="180"/><use href="#g49" x="396" y="180"/><use href="#g55" x="405" y="180"/><use href="#g55" x="450" y="180"/><use href="#g49" x="495" y="180"/><use href="#g54" x="504" y="180"/><use href="#g56" x="513" y="180"/><use href="#g49" x="522" y="180"/><use href="#g50" x="531" y="180"/><use href="#g53" x="540" y="180"/><use href="#g51" x="549" y="180"/><use href="#g49" x="594" y="180"/><use href="#g56" x="603" y="180"/><use href="#g55" x="612" y="180"/><use href="#g54" x="621" y="180"/><use href="#g51" x="630" y="180"/><use href="#g55" x="639" y="180"/><use href="#g48" x="648" y="180"/><use href="#g49" x="675" y="180"/><use href="#g49" x="684" y="180"/><use href="#g53" x="693" y="180"/><use href="#g56" x="162" y="195"/><use href="#g49" x="207" y="195"/><use href="#g56" x="216" y="195"/><use href="#g55" x="225" y="195"/><use href="#g54" x="234" y="195"/><use href="#g51" x="243" y="195"/><use href="#g55" x="252" y="195"/><use href="#g49" x="261" y="195"/><use href="#g50" x="306" y="195"/><use href="#g49" x="315" y="195"/><use href="#g50" x="324" y="195"/><use href="#g52" x="333" y="195"/><use href="#g49" x="342" y="195"/><use href="#g50" x="351" y="195"/><use href="#g53" x="360" y="195"/><use href="#g49" x="387" y="195"/><use href="#g49" x="396" y="195"/><use href="#g51" x="405" y="195"/><use href="#g57" x="450" y="195"/><use href="#g50" x="495" y="195"/><use href="#g49" x="504" y="195"/><use href="#g50" x="513" y="195"/><use href="#g52" x="522" y="195"/><use href="#g49" x="531" y="195"/><use href="#g50" x="540" y="195"/><use href="#g54" x="549" y="195"/><use href="#g50" x="594" y="195"/><use href="#g49" x="603" y="195"/><use href="#g57" x="612" y="195"/><use href="#g54" x="621" y="195"/><use href="#g57" x="630" y="195"/><use href="#g51" x="639" y="195"/><use href="#g49" x="648" y="195"/><use href="#g49" x="675" y="195"/><use href="#g49" x="684" y="195"/><use href="#g50" x="693" y="195"/><use href="#g49" x="153" y="210"/><use href="#g48" x="162" y="210"/><use href="#g50" x="207" y="210"/><use href="#g49" x="216" y="210"/><use href="#g57" x="225" y="210"/><use href="#g54" x="234" y="210"/><use href="#g57" x="243" y="210"/><use href="#g51" x="252" y="210"/><use href="#g50" x="261" y="210"/><use href="#g50" x="306" y="210"/><use href="#g52" x="315" y="210"/><use href="#g48" x="324" y="210"/><use href="#g57" x="333" y="210"/><use href="#g48" x="342" y="210"/><use href="#g51" x="351" y="210"/><use href="#g49" x="360" y="210"/><use href="#g49" x="387" y="210"/><use href="#g49" x="396" y="210"/><use href="#g48" x="405" y="210"/><use href="#g49" x="441" y="210"/><use href="#g49" x="450" y="210"/><use href="#g50" x="495" y="210"/><use href="#g52" x="504" y="210"/><use href="#g48" x="513" y="210"/><use href="#g57" x="522" y="210"/><use href="#g48" x="531" y="210"/><use href="#g51" x="540" y="210"/><use href="#g50" x="549" y="210"/><use href="#g50" x="594" y="210"/><use href="#g53" x="603" y="210"/><use href="#g54" x="612" y="210"/><use href="#g57" x="621" y="210"/><use href="#g54" x="630" y="210"/><use href="#g56" x="639" y="210"/><use href="#g49" x="648" y="210"/><use href="#g49" x="675" y="210"/><use href="#g48" x="684" y="210"/><use href="#g56" x="693" y="210"/><use href="#g49" x="153" y="225"/><use href="#g50" x="162" y="225"/><use href="#g50" x="207" y="225"/><use href="#g53" x="216" y="225"/><use href="#g54" x="225" y="225"/><use href="#g57" x="234" y="225"/><use href="#g54" x="243" y="225"/><use href="#g56" x="252" y="225"/><use href="#g50" x="261" y="225"/><use href="#g50" x="306" y="225"/><use href="#g54" x="315" y="225"/><use href="#g55" x="324" y="225"/><use href="#g51" x="333" y="225"/><use href="#g52" x="342" y="225"/><use href="#g51" x="351" y="225"/><use href="#g51" x="360" y="225"/><use href="#g49" x="387" y="225"/><use href="#g48" x="396" y="225"/><use href="#g55" x="405" y="225"/><use href="#g49" x="441" y="225"/><use href="#g51" x="450" y="225"/><use href="#g50" x="495" y="225"/><use href="#g54" x="504" y="225"/><use href="#g55" x="513" y="225"/><use href="#g51" x="522" y="225"/><use href="#g52" x="531" y="225"/><use href="#g51" x="540" y="225"/><use href="#g52" x="549" y="225"/><use href="#g50" x="594" y="225"/><use href="#g55" x="603" y="225"/><use href="#g53" x="612" y="225"/><use href="#g55" x="621" y="225"/><use href="#g53" x="630" y="225"/><use href="#g50" x="639" y="225"/><use href="#g57" x="648" y="225"/><use href="#g49" x="675" y="225"/><use href="#g48" x="684" y="225"/><use href="#g54" x="693" y="225"/><use href="#g49" x="153" y="240"/><use href="#g52" x="162" y="240"/><use href="#g50" x="207" y="240"/><use href="#g55" x="216" y="240"/><use href="#g53" x="225" y="240"/><use href="#g55" x="234" y="240"/><use href="#g53" x="243" y="240"/><use href="#g51" x="252" y="240"/><use href="#g48" x="261" y="240"/><use href="#g50" x="306" y="240"/><use href="#g57" x="315" y="240"/><use href="#g48" x="324" y="240"/><use href="#g52" x="333" y="240"/><use href="#g50" x="342" y="240"/><use href="#g49" x="351" y="240"/><use href="#g55" x="360" y="240"/><use href="#g49" x="387" y="240"/><use href="#g48" x="396" y="240"/><use href="#g52" x="405" y="240"/><use href="#g49" x="441" y="240"/><use href="#g53" x="450" y="240"/><use href="#g50" x="495" y="240"/><use href="#g57" x="504" y="240"/><use href="#g48" x="513" y="240"/><use href="#g52" x="522" y="240"/><use href="#g50" x="531" y="240"/><use href="#g49" x="540" y="240"/><use href="#g56" x="549" y="240"/><use href="#g51" x="594" y="240"/><use href="#g48" x="603" y="240"/><use href="#g56" x="612" y="240"/><use href="#g49" x="621" y="240"/><use href="#g56" x="630" y="240"/><use href="#g48" x="639" y="240"/><use href="#g57" x="648" y="240"/><use href="#g49" x="675" y="240"/><use href="#g48" x="684" y="240"/><use href="#g50" x="693" y="240"/><use href="#g49" x="153" y="255"/><use href="#g54" x="162" y="255"/><use href="#g51" x="207" y="255"/><use href="#g48" x="216" y="255"/><use href="#g56" x="225" y="255"/><use href="#g49" x="234" y="255"/><use href="#g56" x="243" y="255"/><use href="#g49" x="252" y="255"/><use href="#g48" x="261" y="255"/><use href="#g51" x="306" y="255"/><use href="#g50" x="315" y="255"/><use href="#g51" x="324" y="255"/><use href="#g57" x="333" y="255"/><use href="#g51" x="342" y="255"/><use href="#g57" x="351" y="255"/><use href="#g53" x="360" y="255"/><use href="#g49" x="387" y="255"/><use href="#g48" x="396" y="255"/><use href="#g48" x="405" y="255"/><use href="#g49" x="441" y="255"/><use href="#g55" x="450" y="255"/><use href="#g51" x="495" y="255"/><use href="#g50" x="504" y="255"/><use href="#g51" x="513" y="255"/><use href="#g57" x="522" y="255"/><use href="#g51" x="531" y="255"/><use href="#g57" x="540" y="255"/><use href="#g54" x="549" y="255"/><use href="#g51" x="594" y="255"/><use href="#g51" x="603" y="255"/><use href="#g49" x="612" y="255"/><use href="#g53" x="621" y="255"/><use href="#g55" x="630" y="255"/><use href="#g54" x="639" y="255"/><use href="#g53" x="648" y="255"/><use href="#g57" x="684" y="255"/><use href="#g57" x="693" y="255"/><use href="#g49" x="153" y="270"/><use href="#g56" x="162" y="270"/><use href="#g51" x="207" y="270"/><use href="#g51" x="216" y="270"/><use href="#g49" x="225" y="270"/><use href="#g53" x="234" y="270"/><use href="#g55" x="243" y="270"/><use href="#g54" x="252" y="270"/><use href="#g54" x="261" y="270"/><use href="#g51" x="306" y="270"/><use href="#g52" x="315" y="270"/><use href="#g52" x="324" y="270"/><use href="#g50" x="333" y="270"/><use href="#g57" x="342" y="270"/><use href="#g55" x="351" y="270"/><use href="#g54" x="360" y="270"/><use href="#g57" x="396" y="270"/><use href="#g55" x="405" y="270"/><use href="#g49" x="441" y="270"/><use href="#g57" x="450" y="270"/><use href="#g51" x="495" y="270"/><use href="#g52" x="504" y="270"/><use href="#g52" x="513" y="270"/><use href="#g50" x="522" y="270"/><use href="#g57" x="531" y="270"/><use href="#g55" x="540" y="270"/><use href="#g55" x="549" y="270"/><use href="#g51" x="594" y="270"/><use href="#g53" x="603" y="270"/><use href="#g50" x="612" y="270"/><use href="#g51" x="621" y="270"/><use href="#g51" x="630" y="270"/><use href="#g56" x="639" y="270"/><use href="#g52" x="648" y="270"/><use href="#g57" x="684" y="270"/><use href="#g54" x="693" y="270"/><use href="#g50" x="153" y="285"/><use href="#g48" x="162" y="285"/><use href="#g51" x="207" y="285"/><use href="#g53" x="216" y="285"/><use href="#g50" x="225" y="285"/><use href="#g51" x="234" y="285"/><use href="#g51" x="243" y="285"/><use href="#g56" x="252" y="285"/><use href="#g53" x="261" y="285"/><use href="#g51" x="306" y="285"/><use href="#g54" x="315" y="285"/><use href="#g53" x="324" y="285"/><use href="#g51" x="333" y="285"/><use href="#g57" x="342" y="285"/><use href="#g50" x="351" y="285"/><use href="#g48" x="360" y="285"/><use href="#g57" x="396" y="285"/><use href="#g52" x="405" y="285"/><use href="#g50" x="441" y="285"/><use href="#g49" x="450" y="285"/><use href="#g51" x="495" y="285"/><use href="#g54" x="504" y="285"/><use href="#g53" x="513" y="285"/><use href="#g51" x="522" y="285"/><use href="#g57" x="531" y="285"/><use href="#g50" x="540" y="285"/><use href="#g49" x="549" y="285"/><use href="#g51" x="594" y="285"/><use href="#g55" x="603" y="285"/><use href="#g56" x="612" y="285"/><use href="#g53" x="621" y="285"/><use href="#g55" x="630" y="285"/><use href="#g52" x="639" y="285"/><use href="#g48" x="648" y="285"/><use href="#g57" x="684" y="285"/><use href="#g50" x="693" y="285"/><use href="#g50" x="153" y="300"/><use href="#g50" x="162" y="300"/><use href="#g51" x="207" y="300"/><use href="#g55" x="216" y="300"/><use href="#g56" x="225" y="300"/><use href="#g53" x="234" y="300"/><use href="#g55" x="243" y="300"/><use href="#g52" x="252" y="300"/><use href="#g49" x="261" y="300"/><use href="#g51" x="306" y="300"/><use href="#g57" x="315" y="300"/><use href="#g48" x="324" y="300"/><use href="#g56" x="333" y="300"/><use href="#g55" x="342" y="300"/><use href="#g52" x="351" y="300"/><use href="#g56" x="360" y="300"/><use href="#g57" x="396" y="300"/><use href="#g48" x="405" y="300"/><use href="#g50" x="441" y="300"/><use href="#g51" x="450" y="300"/><use href="#g51" x="495" y="300"/><use href="#g57" x="504" y="300"/><use href="#g48" x="513" y="300"/><use href="#g56" x="522" y="300"/><use href="#g55" x="531" y="300"/><use href="#g52" x="540" y="300"/><use href="#g57" x="549" y="300"/><use href="#g51" x="594" y="300"/><use href="#g57" x="603" y="300"/><use href="#g55" x="612" y="300"/><use href="#g57" x="621" y="300"/><use href="#g51" x="630" y="300"/><use href="#g56" x="639" y="300"/><use href="#g48" x="648" y="300"/><use href="#g56" x="684" y="300"/><use href="#g57" x="693" y="300"/><use href="#g50" x="153" y="315"/><use href="#g52" x="162" y="315"/><use href="#g51" x="207" y="315"/><use href="#g57" x="216" y="315"/><use href="#g55" x="225" y="315"/><use href="#g57" x="234" y="315"/><use href="#g51" x="243" y="315"/><use href="#g56" x="252" y="315"/><use href="#g49" x="261" y="315"/><use href="#g52" x="306" y="315"/><use href="#g48" x="315" y="315"/><use href="#g50" x="324" y="315"/><use href="#g56" x="333" y="315"/><use href="#g56" x="342" y="315"/><use href="#g53" x="351" y="315"/><use href="#g48" x="360" y="315"/><use href="#g56" x="396" y="315"/><use href="#g56" x="405" y="315"/><use href="#g50" x="441" y="315"/><use href="#g53" x="450" y="315"/><use href="#g52" x="495" y="315"/><use href="#g48" x="504" y="315"/><use href="#g50" x="513" y="315"/><use href="#g56" x="522" y="315"/><use href="#g56" x="531" y="315"/><use href="#g53" x="540" y="315"/><use href="#g49" x="549" y="315"/><use href="#g52" x="594" y="315"/><use href="#g49" x="603" y="315"/><use href="#g51" x="612" y="315"/><use href="#g53" x="621" y="315"/><use href="#g48" x="630" y="315"/><use href="#g50" x="639" y="315"/><use href="#g54" x="648" y="315"/><use href="#g56" x="684" y="315"/><use href="#g54" x="693" y="315"/><use href="#g50" x="153" y="330"/><use href="#g54" x="162" y="330"/><use href="#g52" x="207" y="330"/><use href="#g49" x="216" y="330"/><use href="#g51" x="225" y="330"/><use href="#g53" x="234" y="330"/><use href="#g48" x="243" y="330"/><use href="#g50" x="252" y="330"/><use href="#g55" x="261" y="330"/><use href="#g52" x="306" y="330"/><use href="#g49" x="315" y="330"/><use href="#g57" x="324" y="330"/><use href="#g52" x="333" y="330"/><use href="#g57" x="342" y="330"/><use href="#g57" x="351" y="330"/><use href="#g52" x="360" y="330"/><use href="#g56" x="396" y="330"/><use href="#g51" x="405" y="330"/><use href="#g68" x="0" y="345"/><use href="#g105" x="9" y="345"/><use href="#g110" x="18" y="345"/><use href="#g102" x="27" y="345"/><use href="#g111" x="36" y="345"/><use href="#g58" x="45" y="345"/><use href="#g91" x="90" y="345"/><use href="#g81" x="99" y="345"/><use href="#g93" x="108" y="345"/><use href="#g117" x="117" y="345"/><use href="#g105" x="126" y="345"/><use href="#g116" x="135" y="345"/><use href="#g91" x="153" y="345"/><use href="#g70" x="162" y="345"/><use href="#g93" x="171" y="345"/><use href="#g105" x="180" y="345"/><use href="#g114" x="189" y="345"/><use href="#g115" x="198" y="345"/><use href="#g116" x="207" y="345"/><use href="#g91" x="225" y="345"/><use href="#g76" x="234" y="345"/><use href="#g93" x="243" y="345"/><use href="#g97" x="252" y="345"/><use href="#g115" x="261" y="345"/><use href="#g116" x="270" y="345"/><use href="#g91" x="288" y="345"/><use href="#g78" x="297" y="345"/><use href="#g93" x="306" y="345"/><use href="#g101" x="315" y="345"/><use href="#g120" x="324" y="345"/><use href="#g116" x="333" y="345"/><use href="#g91" x="351" y="345"/><use href="#g80" x="360" y="345"/><use href="#g93" x="369" y="345"/><use href="#g114" x="378" y="345"/><use href="#g101" x="387" y="345"/><use href="#g118" x="396" y="345"/><use href="#g105" x="405" y="345"/><use href="#g111" x="414" y="345"/><use href="#g117" x="423" y="345"/><use href="#g115" x="432" y="345"/></svg>
<i style="left:70px;top:402px;width:9px;height:15px;background:#ffff00"></i>
</body></html>
